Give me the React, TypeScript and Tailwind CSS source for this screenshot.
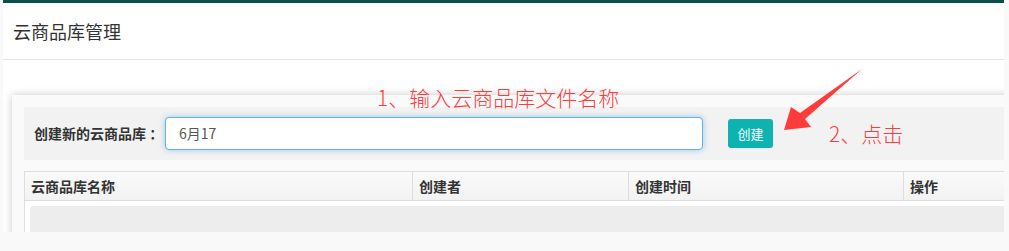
export default function App() {
  const font = "font-['Noto_Sans_CJK_SC','Liberation_Sans',sans-serif]";
  return (
    <div className={`relative w-[1009px] h-[251px] overflow-hidden bg-[#f9f9f9] ${font}`}>
      {/* Page */}
      <div className="ml-[3px] w-[1001px] h-[232px] overflow-hidden bg-white border-t-[3px] border-[#0b4f4b]">
        {/* Title bar */}
        <div className="h-[57px] flex items-center pl-[10px] border-b border-[#e3e3e3] text-[18px] text-[#333]">
          云商品库管理
        </div>

        {/* Panel */}
        <div className="mt-[35px] ml-[9px] w-[1020px] bg-[#fafafa] pt-[12px] pl-[12px] shadow-[0_0_8px_rgba(0,0,0,0.22)]">
          {/* Create form */}
          <div className="h-[53px] flex items-center pl-[10px] bg-[#f2f2f2]">
            <span className="text-[14px] font-bold text-[#333] w-[131px]">创建新的云商品库 ：</span>
            <div className="w-[538px] h-[33px] flex items-center pl-[13px] bg-white rounded-[4px] border border-[#66afe9] shadow-[0_0_6px_rgba(102,175,233,0.6)] text-[14px] text-[#555]">
              6月17
            </div>
            <button className="ml-[25px] w-[45px] h-[29px] rounded-[3px] bg-[#0db3b0] text-white text-[13px]">
              创建
            </button>
          </div>

          {/* Table */}
          <div className="mt-[11px] border-t border-l border-[#dddddd]">
            <div className="flex h-[29px] border-b border-[#dddddd] bg-gradient-to-b from-[#fafafa] to-[#f2f2f2] text-[14px] font-bold text-[#333]">
              <div className="w-[388px] flex items-center pl-[6px] border-r border-[#dddddd]">云商品库名称</div>
              <div className="w-[216px] flex items-center pl-[6px] border-r border-[#dddddd]">创建者</div>
              <div className="w-[275px] flex items-center pl-[6px] border-r border-[#dddddd]">创建时间</div>
              <div className="flex-1 flex items-center pl-[6px]">操作</div>
            </div>
            <div className="bg-white pt-[5px] pl-[5px]">
              <div className="h-[40px] rounded-[4px] bg-[#ededed]" />
            </div>
          </div>
        </div>
      </div>

      {/* Annotations */}
      <div className="absolute left-[377px] top-[84px] text-[21px] leading-[26px] font-light text-[#ff3b3b]">
        1、输入云商品库文件名称
      </div>
      <div className="absolute left-[829px] top-[120px] text-[21px] leading-[26px] font-light text-[#ff3b3b]">
        2、点击
      </div>
      <svg className="absolute left-0 top-0" width="1009" height="251" viewBox="0 0 1009 251">
        <polygon
          points="862,69 805,119 811,127 784,130 791,107 800,113"
          fill="#ff3b3b"
        />
      </svg>
    </div>
  );
}
